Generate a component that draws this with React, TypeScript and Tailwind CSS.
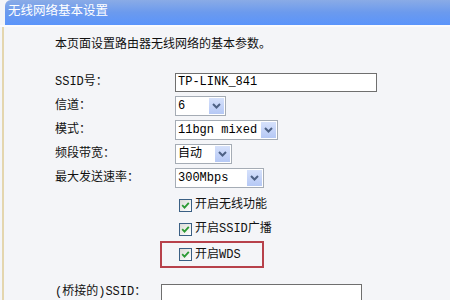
import React from "react";

const font = "font-['Liberation_Mono','Noto_Sans_CJK_SC',monospace]";

function Select({ value, width }: { value: string; width: string }) {
  return (
    <div
      className={`flex h-[20px] items-center justify-between border border-[#a5acb5] bg-white ${width}`}
    >
      <span className="pl-[2px] leading-[18px] text-black">{value}</span>
      <span className="m-[1px] flex h-[16px] w-[15px] items-center justify-center bg-gradient-to-b from-[#d6e1fb] to-[#b5c8f5]">
        <svg width="9" height="6" viewBox="0 0 9 6">
          <path d="M1 1 L4.5 4.5 L8 1" fill="none" stroke="#4d6185" strokeWidth="2" />
        </svg>
      </span>
    </div>
  );
}

function Check({ label }: { label: string }) {
  return (
    <div className="flex items-center gap-[3px]">
      <span className="flex h-[13px] w-[13px] items-center justify-center border border-[#3a5f84] bg-gradient-to-br from-[#dcdcd7] to-white">
        <svg width="9" height="9" viewBox="0 0 9 9">
          <path d="M1.2 4.2 L3.5 6.6 L7.8 1.8" fill="none" stroke="#2c9a33" strokeWidth="1.8" />
        </svg>
      </span>
      <span>{label}</span>
    </div>
  );
}

function Row({ label, children }: { label: string; children: React.ReactNode }) {
  return (
    <div className="flex h-[24px] items-center">
      <div className="w-[120px]">{label}</div>
      {children}
    </div>
  );
}

export default function App() {
  return (
    <div className={`h-[300px] w-[450px] overflow-hidden bg-[#f4f5f8] text-[12px] text-[#111] ${font}`}>
      <div className="ml-[5px] h-[25px] rounded-tl-[6px] bg-gradient-to-b from-[#8aabe6] via-[#6b9aee] to-[#5b94fb] pl-[3px] text-[12.5px] leading-[25px] text-white">
        无线网络基本设置
      </div>
      <div className="h-[2px] bg-[#fbfbfd]" />
      <div className="ml-[2px] h-full border-l-2 border-[#e4d6ae] pl-[51px] pt-[9px]">
        <div className="leading-[18px]">本页面设置路由器无线网络的基本参数。</div>
        <div className="mt-[16px]">
          <Row label="SSID号：">
            <div className="h-[19px] w-[202px] border border-[#6f6f6f] bg-white pl-[2px] leading-[17px] text-black">
              TP-LINK_841
            </div>
          </Row>
          <Row label="信道：">
            <Select value="6" width="w-[51px]" />
          </Row>
          <Row label="模式：">
            <Select value="11bgn mixed" width="w-[103px]" />
          </Row>
          <Row label="频段带宽：">
            <Select value="自动" width="w-[57px]" />
          </Row>
          <Row label="最大发送速率：">
            <Select value="300Mbps" width="w-[89px]" />
          </Row>
        </div>
        <div className="mt-[3px] flex flex-col">
          <div className="flex h-[24px] items-center pl-[124px]">
            <Check label="开启无线功能" />
          </div>
          <div className="flex h-[24px] items-center pl-[124px]">
            <Check label="开启SSID广播" />
          </div>
          <div className="ml-[105px] flex h-[27px] w-[104px] items-center border-2 border-[#b7414b] pl-[17px]">
            <Check label="开启WDS" />
          </div>
        </div>
        <div className="mt-[12px] flex h-[24px] items-center">
          <div className="w-[106px]">(桥接的)SSID：</div>
          <div className="h-[20px] w-[201px] self-end border border-[#6f6f6f] bg-white" />
        </div>
      </div>
    </div>
  );
}
